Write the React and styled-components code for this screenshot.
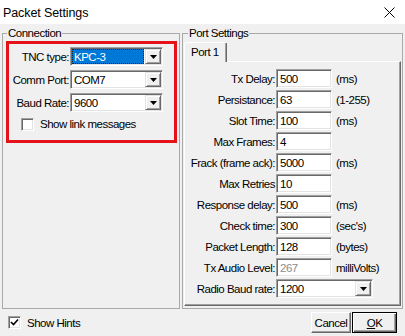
import React from 'react';
import styled, { createGlobalStyle } from 'styled-components';

// Global reset
const GlobalStyle = createGlobalStyle`
  html, body {
    margin: 0;
    padding: 0;
    background: #f0f0f0;
  }
  body {
    font-family: "Liberation Sans", Arial, sans-serif;
    font-size: 11.5px;
    letter-spacing: -0.5px;
    color: #000;
  }
  * {
    box-sizing: border-box;
  }
`;

const Window = styled.div`
  width: 405px;
  height: 336px;
  background: #f0f0f0;
  display: flex;
  flex-direction: column;
  overflow: hidden;
`;

//   Title bar
const TitleBar = styled.div`
  height: 24px;
  flex-shrink: 0;
  background: #fff;
  display: flex;
  align-items: center;
  justify-content: space-between;
  padding: 0 10px 0 3px;
`;

const Title = styled.div`
  font-size: 12.5px;
  letter-spacing: -0.1px;
  padding-top: 1px;
`;

const Columns = styled.div`
  display: flex;
  gap: 2px;
  padding: 3px 0 0 2px;
  height: 285px;
  flex-shrink: 0;
`;

const Group = styled.fieldset`
  margin: 0;
  min-width: 0;
  width: ${(p) => p.$width}px;
  height: 282px;
  border: 1px solid #a9a9a9;
  padding: ${(p) => p.$pad};
  display: flex;
  flex-direction: column;
`;

const Legend = styled.legend`
  padding: 0 1px;
  margin-left: ${(p) => p.$offset}px;
  line-height: 13px;
`;

// red annotation box round the connection fields
const Highlight = styled.div`
  border: 3px solid #e5121b;
  height: 102px;
  padding-top: 2px;
`;

const FormGrid = styled.div`
  display: grid;
  grid-template-columns: 60px 93px;
  grid-auto-rows: 21px;
  column-gap: 1px;
  row-gap: 2px;
  align-items: center;
`;

const Label = styled.div`
  text-align: right;
  white-space: nowrap;
`;

const ComboBox = styled.div`
  width: ${(p) => p.$width}px;
  height: 19px;
  display: flex;
  background: #fff;
  border: 1px solid;
  border-color: #a0a0a0 #fff #fff #a0a0a0;
  box-shadow: inset 1px 1px 0 #696969, inset -1px -1px 0 #e3e3e3;
  padding: 1px;
  grid-column: ${(p) => (p.$span ? 'span 2' : 'auto')};
`;

const ComboValue = styled.div`
  flex: 1;
  display: flex;
  align-items: center;
  padding-left: 2px;
  background: ${(p) => (p.$selected ? '#0078d7' : 'transparent')};
  color: ${(p) => (p.$selected ? '#fff' : '#000')};
  outline: ${(p) => (p.$selected ? '1px dotted #222' : 'none')};
  outline-offset: -1px;
  margin-right: 1px;
`;

const DropButton = styled.div`
  width: 16px;
  display: flex;
  align-items: center;
  justify-content: center;
  background: #f0f0f0;
  border: 1px solid;
  border-color: #e3e3e3 #696969 #696969 #e3e3e3;
  box-shadow: inset 1px 1px 0 #fff, inset -1px -1px 0 #a0a0a0;
`;

const CheckRow = styled.label`
  display: flex;
  align-items: center;
  gap: 6px;
  height: 18px;
  margin: ${(p) => p.$margin};
`;

const CheckBox = styled.span`
  width: 13px;
  height: 13px;
  display: flex;
  align-items: center;
  justify-content: center;
  background: #fff;
  border: 1px solid;
  border-color: #a0a0a0 #fff #fff #a0a0a0;
  box-shadow: inset 1px 1px 0 #696969, inset -1px -1px 0 #e3e3e3;
`;

//   Port settings tab
const Tab = styled.div`
  position: relative;
  z-index: 1;
  align-self: flex-start;
  width: 43px;
  height: 20px;
  margin-bottom: -1px;
  padding: 3px 0 0 6px;
  background: #f0f0f0;
  border: 1px solid;
  border-bottom: none;
  border-color: #fff #696969 transparent #fff;
  border-radius: 2px 2px 0 0;
  box-shadow: inset -1px 0 0 #a0a0a0;
`;

const TabPanel = styled.div`
  flex: 1;
  border: 1px solid;
  border-color: #fff #696969 #696969 #fff;
  box-shadow: inset -1px -1px 0 #a0a0a0;
  padding: 7px 0 0 1px;
`;

const SettingsGrid = styled.div`
  display: grid;
  grid-template-columns: 89px 56px auto;
  grid-auto-rows: 19px;
  column-gap: 1px;
  row-gap: 2px;
  align-items: center;
`;

const TextInput = styled.div`
  height: 19px;
  display: flex;
  align-items: center;
  padding-left: 3px;
  background: #fff;
  color: ${(p) => (p.$disabled ? '#8c8c8c' : '#000')};
  border: 1px solid;
  border-color: #a0a0a0 #fff #fff #a0a0a0;
  box-shadow: inset 1px 1px 0 #696969, inset -1px -1px 0 #e3e3e3;
`;

const Unit = styled.div`
  padding-left: 3px;
  white-space: nowrap;
`;

//   Footer
const Footer = styled.div`
  flex: 1;
  display: flex;
  align-items: center;
  padding: 0 8px 0 8px;
`;

const Buttons = styled.div`
  margin-left: auto;
  display: flex;
  gap: 1px;
`;

const Button = styled.div`
  width: ${(p) => p.$width}px;
  height: 21px;
  display: flex;
  align-items: center;
  justify-content: center;
  background: #f0f0f0;
  border: 1px solid;
  border-color: ${(p) => (p.$default ? '#000' : '#fff #696969 #696969 #fff')};
  box-shadow: ${(p) =>
    p.$default
      ? 'inset 1px 1px 0 #fff, inset -1px -1px 0 #696969, inset -2px -2px 0 #a0a0a0'
      : 'inset -1px -1px 0 #a0a0a0'};
  font-size: 11.5px;
  letter-spacing: -0.5px;
`;

const Accel = styled.span`
  text-decoration: underline;
`;

const Arrow = () => (
  <svg width="7" height="4" viewBox="0 0 7 4">
    <polygon points="0,0 7,0 3.5,4" fill="#000" />
  </svg>
);

const CloseIcon = () => (
  <svg width="11" height="11" viewBox="0 0 11 11">
    <path d="M0.5 0.5 L10.5 10.5 M10.5 0.5 L0.5 10.5" stroke="#000" strokeWidth="1" />
  </svg>
);

const Tick = () => (
  <svg width="9" height="9" viewBox="0 0 9 9">
    <path d="M1 4 L3.5 6.5 L8 1.5" stroke="#000" strokeWidth="1.6" fill="none" />
  </svg>
);

const Combo = ({ value, width, selected, span }) => (
  <ComboBox $width={width} $span={span}>
    <ComboValue $selected={selected}>{value}</ComboValue>
    <DropButton>
      <Arrow />
    </DropButton>
  </ComboBox>
);

const connection = [
  { label: 'TNC type:', value: 'KPC-3', selected: true },
  { label: 'Comm Port:', value: 'COM7' },
  { label: 'Baud Rate:', value: '9600' },
];

const portSettings = [
  { label: 'Tx Delay:', value: '500', unit: '(ms)' },
  { label: 'Persistance:', value: '63', unit: '(1-255)' },
  { label: 'Slot Time:', value: '100', unit: '(ms)' },
  { label: 'Max Frames:', value: '4', unit: '' },
  { label: 'Frack (frame ack):', value: '5000', unit: '(ms)' },
  { label: 'Max Retries', value: '10', unit: '' },
  { label: 'Response delay:', value: '500', unit: '(ms)' },
  { label: 'Check time:', value: '300', unit: "(sec's)" },
  { label: 'Packet Length:', value: '128', unit: '(bytes)' },
  { label: 'Tx Audio Level:', value: '267', unit: 'milliVolts)', disabled: true },
];

export default function App() {
  return (
    <>
      <GlobalStyle />
      <Window>
        <TitleBar>
          <Title>Packet Settings</Title>
          <CloseIcon />
        </TitleBar>
        <Columns>
          <Group $width={178} $pad="1px 2px 0 3px">
            <Legend $offset={1}>Connection</Legend>
            <Highlight>
              <FormGrid>
                {connection.map((row) => (
                  <React.Fragment key={row.label}>
                    <Label>{row.label}</Label>
                    <Combo value={row.value} width={93} selected={row.selected} />
                  </React.Fragment>
                ))}
              </FormGrid>
              <CheckRow $margin="2px 0 0 12px">
                <CheckBox />
                Show link messages
              </CheckRow>
            </Highlight>
          </Group>
          <Group $width={221} $pad="2px 1px 2px 1px">
            <Legend $offset={4}>Port Settings</Legend>
            <Tab>Port 1</Tab>
            <TabPanel>
              <SettingsGrid>
                {portSettings.map((row) => (
                  <React.Fragment key={row.label}>
                    <Label>{row.label}</Label>
                    <TextInput $disabled={row.disabled}>{row.value}</TextInput>
                    <Unit>{row.unit}</Unit>
                  </React.Fragment>
                ))}
                <Label>Radio Baud rate:</Label>
                <Combo value="1200" width={97} span />
              </SettingsGrid>
            </TabPanel>
          </Group>
        </Columns>
        <Footer>
          <CheckRow $margin="0">
            <CheckBox>
              <Tick />
            </CheckBox>
            Show Hints
          </CheckRow>
          <Buttons>
            <Button $width={40}>Cancel</Button>
            <Button $width={45} $default>
              <span>
                <Accel>O</Accel>K
              </span>
            </Button>
          </Buttons>
        </Footer>
      </Window>
    </>
  );
}
